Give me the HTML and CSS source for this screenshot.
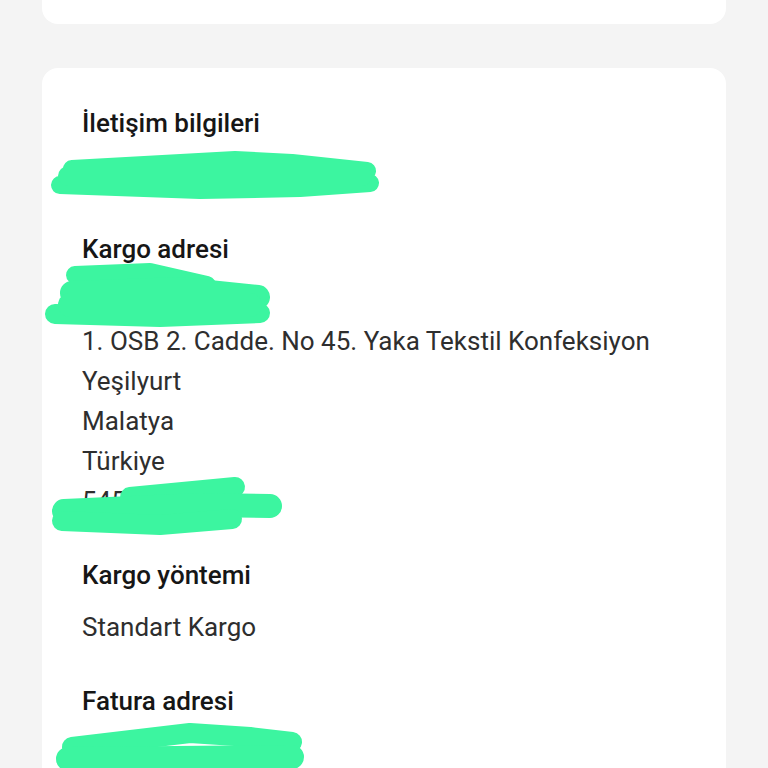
FILE: index.html
```html
<!DOCTYPE html>
<html lang="tr">
<head>
  <meta charset="UTF-8" />
  <meta name="viewport" content="width=device-width, initial-scale=1.0" />
  <title>Ödeme bilgileri</title>
  <link rel="stylesheet" href="styles.css">
</head>
<body>
  <div class="card card-top"></div>

  <div class="card card-main">
    <div class="section">
      <h2>İletişim bilgileri</h2>
      <div class="line hidden-line">
        <svg class="scribble" width="340" height="60" viewBox="0 0 340 60">
          <path d="M30 24 L193 15 L250 18 L325 26" stroke-width="18" />
          <path d="M18 40 L158 45 L258 43 L328 38" stroke-width="18" />
          <path d="M26 31 L320 31" stroke-width="20" />
        </svg>
      </div>
    </div>

    <div class="section">
      <h2>Kargo adresi</h2>
      <div class="line hidden-line">
        <svg class="scribble" width="240" height="75" viewBox="0 0 240 75">
          <path d="M33 14 L108 11 L165 24" stroke-width="18" />
          <path d="M30 32 L138 28 L216 36" stroke-width="24" />
          <path d="M13 53 L118 56 L218 52" stroke-width="20" />
          <path d="M28 44 L208 44" stroke-width="24" />
        </svg>
      </div>
      <div class="line">1. OSB 2. Cadde. No 45. Yaka Tekstil Konfeksiyon</div>
      <div class="line">Yeşilyurt</div>
      <div class="line">Malatya</div>
      <div class="line">Türkiye</div>
      <div class="line hidden-line">545
        <svg class="scribble" width="250" height="75" viewBox="0 0 250 75">
          <path d="M88 36 L193 26" stroke-width="20" />
          <path d="M22 50 L158 44 L228 45" stroke-width="24" />
          <path d="M20 60 L118 64 L190 58" stroke-width="20" />
        </svg>
      </div>
    </div>

    <div class="section">
      <h2>Kargo yöntemi</h2>
      <div class="line">Standart Kargo</div>
    </div>

    <div class="section">
      <h2>Fatura adresi</h2>
      <div class="line hidden-line">
        <svg class="scribble" width="270" height="60" viewBox="0 0 270 60">
          <path d="M30 34 L148 20 L208 24 L250 29" stroke-width="20" />
          <path d="M26 46 L250 44" stroke-width="24" />
        </svg>
      </div>
    </div>
  </div>
</body>
</html>
```

FILE: styles.css
```css
* {
  box-sizing: border-box;
}
body {
  margin: 0;
  padding: 0 42px;
  background: #f4f4f4;
  font-family: Roboto, "Noto Sans", sans-serif;
  color: #222;
}
.card {
  background: #fff;
  border-radius: 16px;
}
.card-top {
  height: 24px;
  border-radius: 0 0 16px 16px;
}
.card-main {
  margin-top: 44px;
  padding: 39px 40px 0;
  min-height: 720px;
}
.section + .section {
  margin-top: 38px;
}
h2 {
  margin: 0 0 16px;
  font-size: 26px;
  line-height: 32px;
  font-weight: 500;
  color: #161616;
}
.line {
  font-size: 26px;
  line-height: 40px;
  color: #2e2e2e;
}
.hidden-line {
  position: relative;
  height: 40px;
}
.scribble {
  position: absolute;
  left: -40px;
  top: -20px;
  fill: none;
  stroke: #3cf5a0;
  stroke-linecap: round;
  stroke-linejoin: round;
}
.section:first-child .scribble {
  top: -10px;
}
```
